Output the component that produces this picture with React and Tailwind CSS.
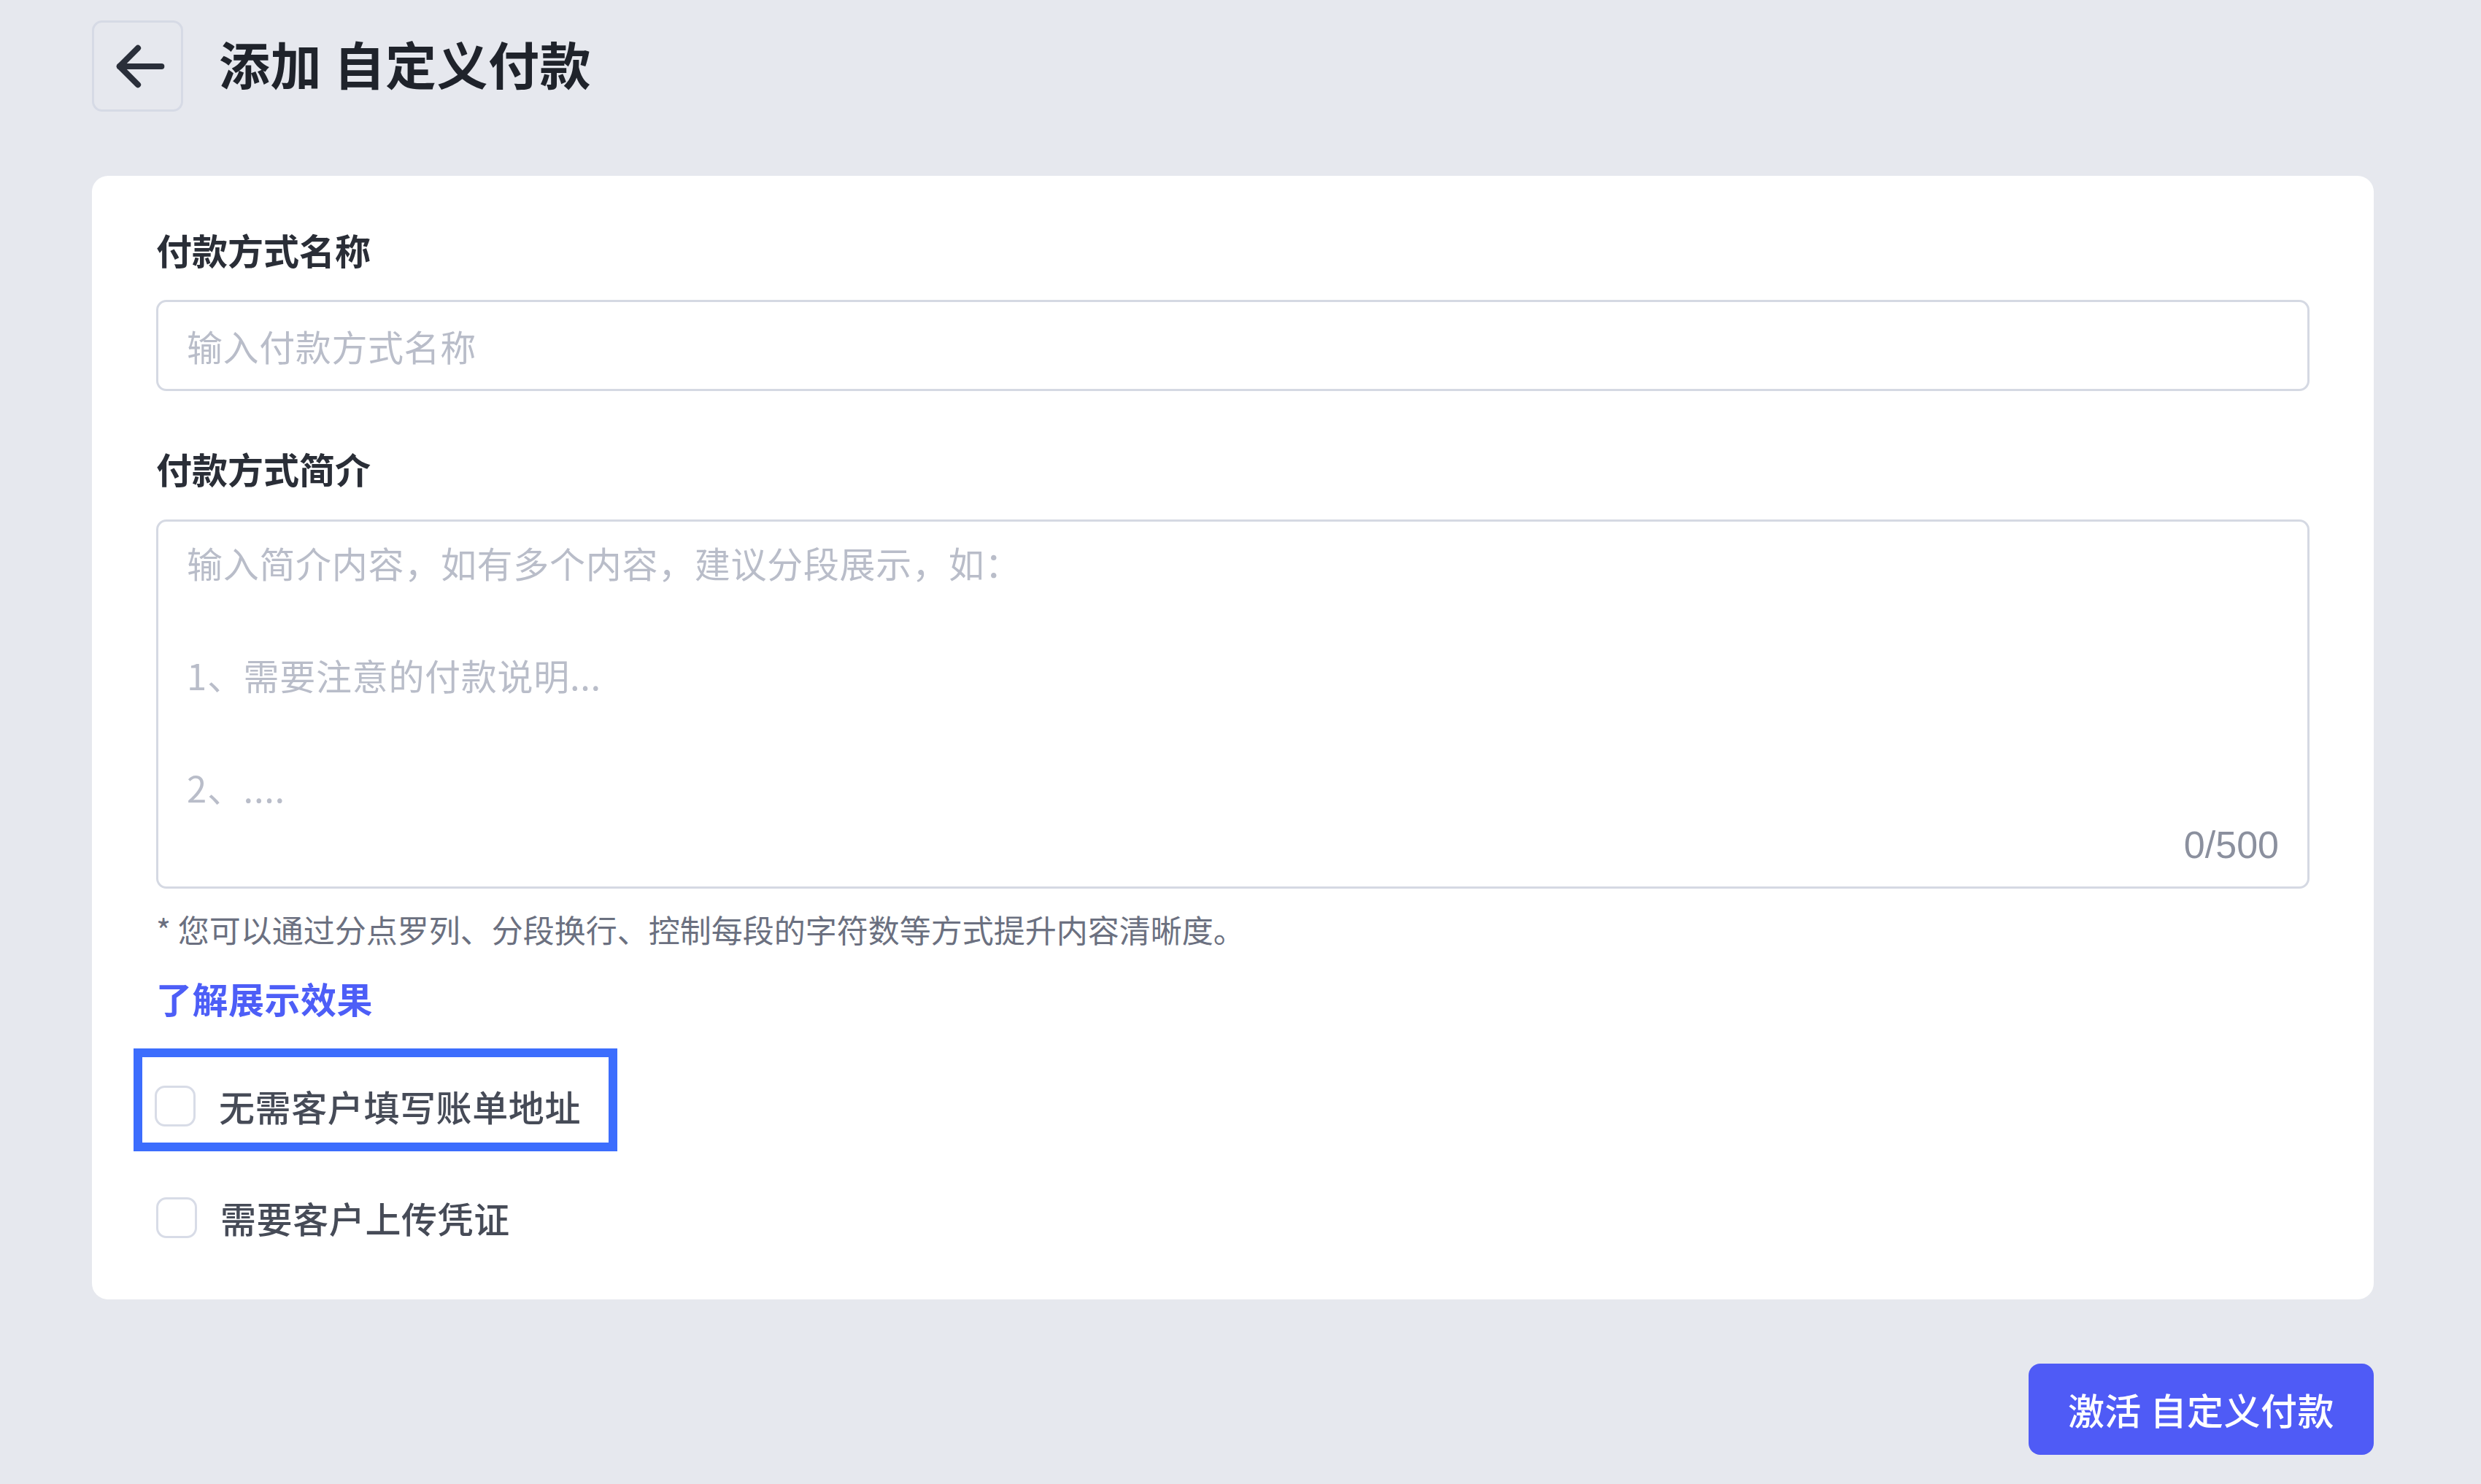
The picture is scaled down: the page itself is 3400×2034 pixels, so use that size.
import React from 'react';

function Checkbox() {
  return <span className="block w-[56px] h-[56px] shrink-0 rounded-[14px] border-[3px] border-[#d8dce7] bg-white"></span>;
}

export default function App() {
  return (
    <div className="min-h-screen w-[3400px] bg-[#e6e8ee] pl-[126px] pt-[28px] font-['Noto_Sans_CJK_SC',sans-serif]">
      <div className="w-[3127px]">
        {/* Header */}
        <div className="flex items-center gap-[49px]">
          <button className="flex h-[125px] w-[125px] items-center justify-center rounded-[14px] border-[3px] border-[#d6dae5]">
            <svg width="86" height="86" viewBox="0 0 24 24" fill="none" stroke="#2a2f3a" strokeWidth="2.3" strokeLinecap="round" strokeLinejoin="round">
              <path d="M12 5 5 12l7 7" />
              <path d="M5 12h16" />
            </svg>
          </button>
          <h1 className="-mt-[8px] text-[70px] leading-none font-semibold tracking-[0.5px] text-[#1f232b]">添加 自定义付款</h1>
        </div>

        {/* Card */}
        <div className="mt-[88px] rounded-[22px] bg-white px-[88px] pt-[65px] pb-[77px]">
          <div className="text-[49px] leading-[72px] font-semibold text-[#2a2e37]">付款方式名称</div>
          <input
            className="mt-[33px] block h-[125px] w-full rounded-[14px] border-[3px] border-[#d5d9e3] px-[39px] text-[49px] tracking-[0.6px] text-[#2a2e37] outline-none placeholder:text-[#b9bdc9]"
            placeholder="输入付款方式名称"
          />

          <div className="mt-[70px] text-[49px] leading-[72px] font-semibold text-[#2a2e37]">付款方式简介</div>
          <div className="relative mt-[34px]">
            <textarea
              className="block h-[506px] w-full resize-none rounded-[14px] border-[3px] border-[#d5d9e3] px-[39px] pt-[17px] text-[49px] leading-[77px] tracking-[0.7px] text-[#2a2e37] outline-none placeholder:text-[#b9bdc9]"
              placeholder={'输入简介内容，如有多个内容，建议分段展示，如：\n\n1、需要注意的付款说明...\n\n2、....'}
            />
            <span className="absolute right-[42px] bottom-[34px] text-[52px] leading-none text-[#8b909e] font-['Liberation_Sans',sans-serif]">0/500</span>
          </div>

          <p className="mt-[24px] text-[43px] leading-[63px] text-[#6b7080]">* 您可以通过分点罗列、分段换行、控制每段的字符数等方式提升内容清晰度。</p>
          <a className="mt-[27px] block w-fit text-[49px] leading-[72px] font-semibold tracking-[0.5px] text-[#4d5ef7]">了解展示效果</a>

          <div className="mt-[33px] -ml-[31px] flex w-fit items-center gap-[32px] border-[12px] border-[#3c6dfd] pl-[17px] pr-[38px] pt-[32px] pb-[15px]">
            <Checkbox />
            <span className="text-[49px] leading-[70px] font-medium tracking-[0.6px] text-[#464b57]">无需客户填写账单地址</span>
          </div>

          <div className="mt-[56px] flex items-center gap-[32px]">
            <Checkbox />
            <span className="text-[49px] leading-[70px] font-medium tracking-[0.6px] text-[#464b57]">需要客户上传凭证</span>
          </div>
        </div>

        {/* Footer */}
        <div className="mt-[88px] flex justify-end">
          <button className="h-[125px] w-[473px] rounded-[16px] bg-[#4f5bf6] text-[50px] font-medium tracking-[0.5px] text-white">激活 自定义付款</button>
        </div>
      </div>
    </div>
  );
}
